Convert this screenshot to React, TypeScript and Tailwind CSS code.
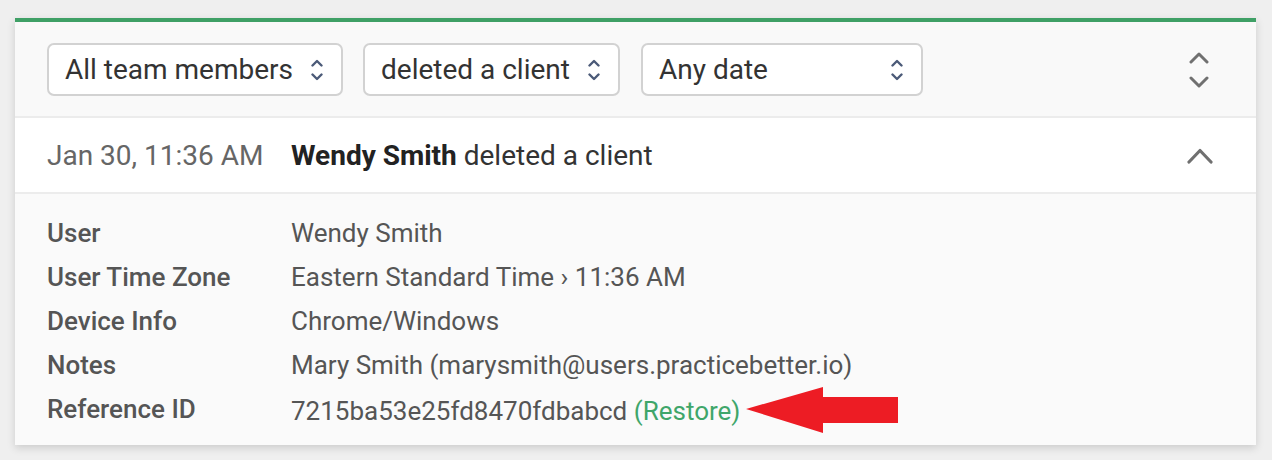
import React from 'react';

const SelectChevron = () => (
  <svg width="12" height="24" viewBox="0 0 12 24" fill="none" className="shrink-0">
    <path d="M1.5 7.5 L6 3 L10.5 7.5" stroke="#4b5a78" strokeWidth="2.4" strokeLinecap="round" strokeLinejoin="round" />
    <path d="M1.5 16.5 L6 21 L10.5 16.5" stroke="#4b5a78" strokeWidth="2.4" strokeLinecap="round" strokeLinejoin="round" />
  </svg>
);

const FilterSelect: React.FC<{ label: string; width: string }> = ({ label, width }) => (
  <button
    className={`${width} h-[53px] flex items-center justify-between pl-[16px] pr-[18px] bg-white border-2 border-[#d2d2d2] rounded-[7px] text-[28px] text-[#333] leading-none`}
  >
    <span>{label}</span>
    <SelectChevron />
  </button>
);

const details = [
  { label: 'User', value: 'Wendy Smith' },
  { label: 'User Time Zone', value: 'Eastern Standard Time › 11:36 AM' },
  { label: 'Device Info', value: 'Chrome/Windows' },
  { label: 'Notes', value: 'Mary Smith (marysmith@users.practicebetter.io)' }
];

export default function App() {
  return (
    <div
      className="min-h-[460px] bg-[#efefef] pt-[18px] pl-[15px] pr-[16px]"
      style={{ fontFamily: 'Roboto, "Noto Sans", sans-serif' }}
    >
      <div className="bg-white border-t-[4px] border-[#3fa066] shadow-[0_3px_8px_rgba(0,0,0,0.15)]">
        {/* Filters */}
        <div className="flex items-center bg-[#f9f9f9] px-[32px] pt-[21px] pb-[20px] border-b-2 border-[#ececec]">
          <div className="flex items-center gap-[20px]">
            <FilterSelect label="All team members" width="w-[296px]" />
            <FilterSelect label="deleted a client" width="w-[257px]" />
            <FilterSelect label="Any date" width="w-[282px] ml-[1px]" />
          </div>
          <svg width="20" height="38" viewBox="0 0 20 38" fill="none" className="ml-auto mr-[15px]">
            <path d="M2 11 L10 3 L18 11" stroke="#707070" strokeWidth="3" strokeLinecap="round" strokeLinejoin="round" />
            <path d="M2 27 L10 35 L18 27" stroke="#707070" strokeWidth="3" strokeLinecap="round" strokeLinejoin="round" />
          </svg>
        </div>

        {/* Event row */}
        <div className="flex items-center h-[76px] px-[32px] pt-[2px] border-b-2 border-[#ececec] text-[28px]">
          <span className="w-[244px] text-[#666]">Jan 30, 11:36 AM</span>
          <span className="text-[#333]">
            <b className="font-bold text-[#222]">Wendy Smith</b> deleted a client
          </span>
          <svg width="26" height="18" viewBox="0 0 26 18" fill="none" className="ml-auto mr-[11px]">
            <path d="M2 15 L13 3.5 L24 15" stroke="#707070" strokeWidth="3.2" strokeLinecap="round" strokeLinejoin="round" />
          </svg>
        </div>

        {/* Details */}
        <div className="grid grid-cols-[244px_1fr] bg-[#fafafa] px-[32px] pt-[17px] pb-[11px] text-[26px] leading-[44px] text-[#555]">
          {details.map((d) => (
            <React.Fragment key={d.label}>
              <span className="font-medium">{d.label}</span>
              <span>{d.value}</span>
            </React.Fragment>
          ))}
          <span className="font-medium">Reference ID</span>
          <span className="flex items-center">
            7215ba53e25fd8470fdbabcd&nbsp;<span className="text-[#3fa66a]">(Restore)</span>
            <svg width="153" height="47" viewBox="0 0 153 47" className="ml-[6px]">
              <polygon points="0,22 77,0 77,10 152,10 152,36 77,36 77,46" fill="#ed1c24" />
            </svg>
          </span>
        </div>
      </div>
    </div>
  );
}
